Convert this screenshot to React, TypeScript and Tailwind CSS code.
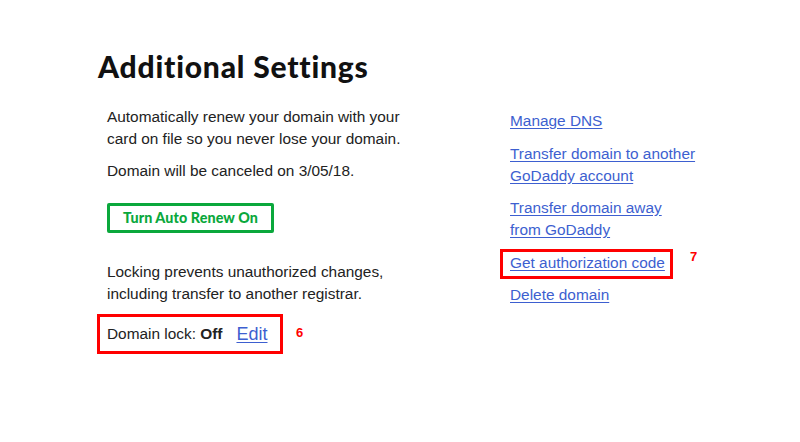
export default function App() {
  const links = [
    ["Manage DNS"],
    ["Transfer domain to another", "GoDaddy account"],
    ["Transfer domain away", "from GoDaddy"],
  ];

  return (
    <div className="min-h-[442px] w-[800px] bg-white font-['Liberation_Sans',Arial,sans-serif] text-[15.4px] leading-[22px] text-[#222]">
      <div className="pl-[98px] pt-[48px]">
        <h1 className="font-['Lato',sans-serif] text-[30px] leading-[36px] font-black tracking-[0.8px] text-[#111]">
          Additional Settings
        </h1>

        <div className="mt-[22px] flex">
          <div className="w-[310px] pl-[9px]">
            <p>
              Automatically renew your domain with your card on file so you
              never lose your domain.
            </p>
            <p className="mt-[10px]">Domain will be canceled on 3/05/18.</p>
            <button
              type="button"
              className="mt-[21px] h-[30px] w-[167px] rounded-[2px] border-[3px] border-[#0aa83c] font-['Lato',sans-serif] text-[14.3px] leading-none font-black tracking-[0.1px] text-[#0aa83c]"
            >
              Turn Auto Renew On
            </button>
            <p className="mt-[28px]">
              Locking prevents unauthorized changes, including transfer to
              another registrar.
            </p>
            <div className="relative mt-[9px]">
              <div className="-ml-[10px] flex h-[40px] w-[186px] items-center border-[3px] border-[#ff0000] pl-[7px]">
                <span>
                  Domain lock: <b>Off</b>
                </span>
                <a
                  href="#"
                  className="ml-[14px] text-[18px] text-[#3d5fd0] underline underline-offset-2"
                >
                  Edit
                </a>
              </div>
              <span className="absolute top-[8px] left-[189px] text-[13px] font-bold text-[#ff0000]">
                6
              </span>
            </div>
          </div>

          <div className="ml-[102px] flex w-[200px] flex-col gap-[10.5px] pt-[4px]">
            {links.map((lines) => (
              <a key={lines[0]} href="#" className="text-[#3d5fd0] underline underline-offset-2">
                {lines.map((line, i) => (
                  <span key={line}>
                    {i > 0 && <br />}
                    {line}
                  </span>
                ))}
              </a>
            ))}
            <div className="relative">
              <a href="#" className="text-[#3d5fd0] underline underline-offset-2">
                Get authorization code
              </a>
              <div className="pointer-events-none absolute -top-[3px] -left-[10px] h-[30px] w-[173px] border-[3px] border-[#ff0000]" />
              <span className="absolute -top-[6px] left-[180px] text-[13px] font-bold text-[#ff0000]">
                7
              </span>
            </div>
            <a href="#" className="text-[#3d5fd0] underline underline-offset-2">
              Delete domain
            </a>
          </div>
        </div>
      </div>
    </div>
  );
}
